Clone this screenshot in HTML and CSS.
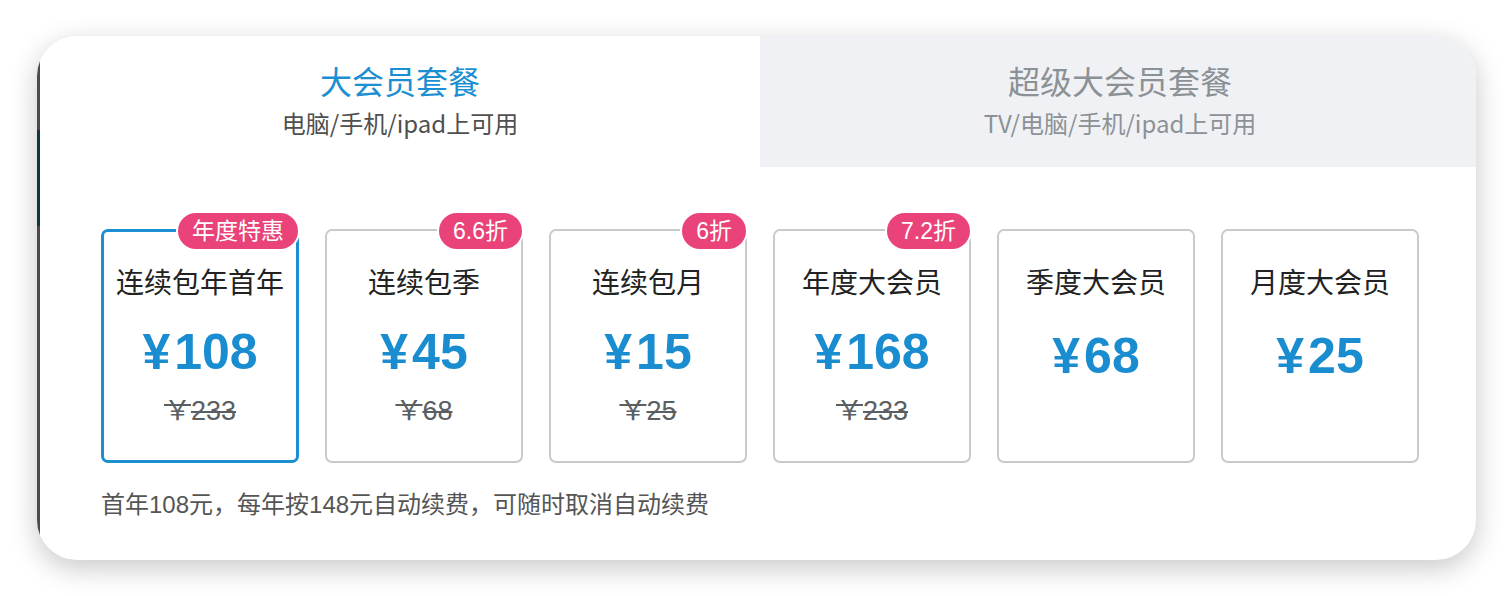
FILE: index.html
```html
<!DOCTYPE html>
<html lang="zh-CN">
<head>
<meta charset="utf-8">
<title>会员套餐</title>
<link rel="stylesheet" href="styles.css">
</head>
<body>
<div class="panel">
  <div class="tabs">
    <div class="tab tab-active">
      <div class="tab-title">大会员套餐</div>
      <div class="tab-sub">电脑/手机/ipad上可用</div>
    </div>
    <div class="tab tab-idle">
      <div class="tab-title">超级大会员套餐</div>
      <div class="tab-sub">TV/电脑/手机/ipad上可用</div>
    </div>
  </div>
  <div class="body">
    <div class="plans">
      <div class="plan plan-selected">
        <span class="badge">年度特惠</span>
        <div class="plan-name">连续包年首年</div>
        <div class="plan-price"><span class="cur">¥</span>108</div>
        <div class="plan-old"><span class="yen">￥</span>233</div>
      </div>
      <div class="plan">
        <span class="badge">6.6折</span>
        <div class="plan-name">连续包季</div>
        <div class="plan-price"><span class="cur">¥</span>45</div>
        <div class="plan-old"><span class="yen">￥</span>68</div>
      </div>
      <div class="plan">
        <span class="badge">6折</span>
        <div class="plan-name">连续包月</div>
        <div class="plan-price"><span class="cur">¥</span>15</div>
        <div class="plan-old"><span class="yen">￥</span>25</div>
      </div>
      <div class="plan">
        <span class="badge">7.2折</span>
        <div class="plan-name">年度大会员</div>
        <div class="plan-price"><span class="cur">¥</span>168</div>
        <div class="plan-old"><span class="yen">￥</span>233</div>
      </div>
      <div class="plan">
        <div class="plan-name">季度大会员</div>
        <div class="plan-price plan-price-solo"><span class="cur">¥</span>68</div>
      </div>
      <div class="plan">
        <div class="plan-name">月度大会员</div>
        <div class="plan-price plan-price-solo"><span class="cur">¥</span>25</div>
      </div>
    </div>
    <div class="note">首年108元，每年按148元自动续费，可随时取消自动续费</div>
  </div>
</div>
</body>
</html>
```

FILE: styles.css
```css
* { box-sizing: border-box; }

html, body {
  margin: 0;
  padding: 0;
  background: #ffffff;
}

body {
  font-family: "Liberation Sans", "Noto Sans CJK SC", sans-serif;
  padding: 36px 0 0 37px;
  height: 596px;
  overflow: hidden;
}

.panel {
  position: relative;
  width: 1439px;
  height: 524px;
  background: #ffffff;
  border-radius: 40px;
  overflow: hidden;
  box-shadow: 0 8px 28px rgba(0, 0, 0, 0.22);
}

.panel::before {
  content: "";
  position: absolute;
  left: 0;
  top: 0;
  bottom: 0;
  width: 3px;
  background: linear-gradient(to bottom,
    #4b4b4b 0, #4b4b4b 94px,
    #0f3646 94px, #0f3646 190px,
    #4b4b4b 190px, #4b4b4b 100%);
  z-index: 2;
}

.tabs {
  display: grid;
  grid-template-columns: 723px 1fr;
  height: 131px;
}

.tab {
  text-align: center;
  padding-top: 25px;
}

.tab-active { background: #ffffff; padding-left: 3px; }
.tab-idle { background: #f0f1f4; padding-left: 4px; }

.tab-title {
  font-size: 32px;
  line-height: 44px;
}

.tab-sub {
  font-family: "Noto Sans CJK SC", sans-serif;
  font-size: 24px;
  line-height: 32px;
  margin-top: 2px;
}

.tab-active .tab-title { color: #1c8fd2; }
.tab-active .tab-sub { color: #4f4f4f; }
.tab-idle .tab-title { color: #8c9196; }
.tab-idle .tab-sub { color: #8c9196; }

.body {
  padding: 62px 0 0 64px;
}

.plans {
  display: flex;
  gap: 26px;
}

.plan {
  position: relative;
  width: 198px;
  height: 234px;
  border: 2px solid #c9cacd;
  border-radius: 7px;
  text-align: center;
  padding-top: 33px;
}

.plan-selected {
  border: 3px solid #1c8fd2;
  padding-top: 32px;
}

.badge {
  position: absolute;
  top: -20px;
  right: -3px;
  height: 40px;
  padding: 0 14px;
  border: 2px solid #ffffff;
  border-radius: 20px;
  background: #e9437a;
  color: #ffffff;
  font-size: 23px;
  line-height: 36px;
  white-space: nowrap;
}

.plan-selected .badge { right: -4px; top: -21px; }

.plan-name {
  font-size: 28px;
  line-height: 40px;
  color: #222222;
}

.plan-price {
  margin-top: 18px;
  font-size: 50px;
  line-height: 60px;
  font-weight: 700;
  color: #1a8dd0;
}

.cur { margin-right: 4px; }

.plan-price-solo { margin-top: 22px; }

.plan-old {
  margin-top: 12px;
  font-size: 27px;
  line-height: 30px;
  color: #5a5f63;
  text-decoration: line-through;
  text-decoration-thickness: 2px;
}

.yen {
  font-family: "Noto Sans CJK SC", sans-serif;
}

.note {
  margin-top: 25px;
  font-size: 24px;
  line-height: 34px;
  color: #555555;
}
```
